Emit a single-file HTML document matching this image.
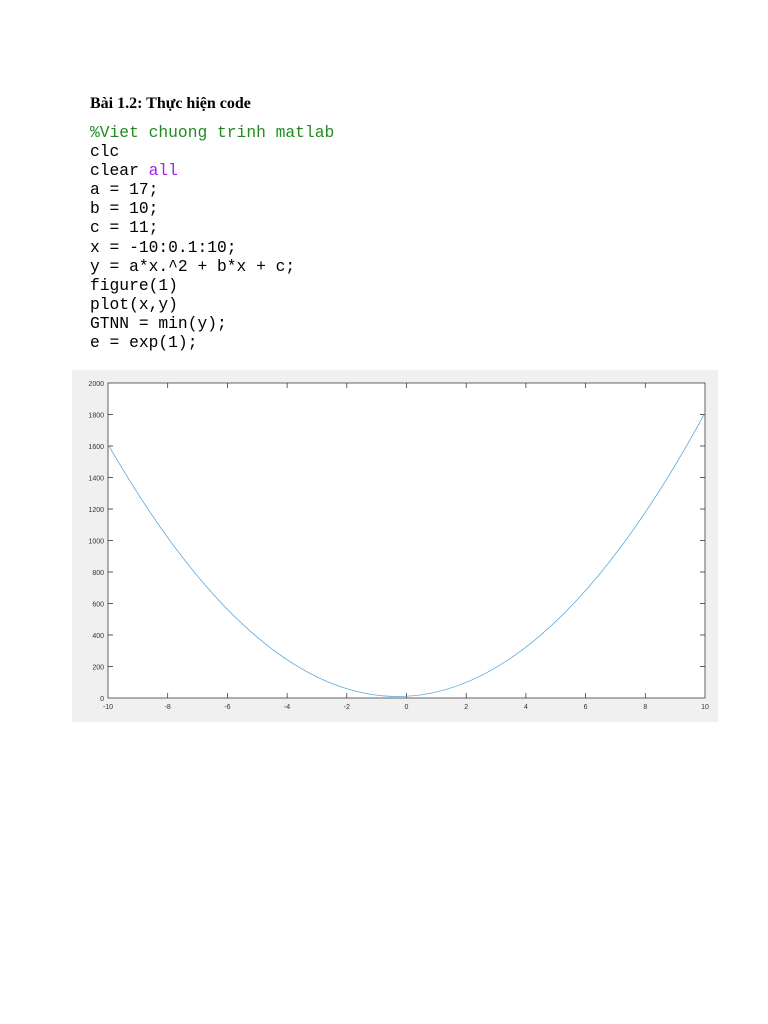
<!DOCTYPE html>
<html><head><meta charset="utf-8"><style>
body{margin:0;width:768px;height:1024px;background:#fff;position:relative;overflow:hidden}
.t{position:absolute;left:90px;top:95px;font:bold 16px "Liberation Serif",serif;color:#000}
pre{position:absolute;left:90px;top:123px;margin:0;font:16.3px/19.1px "Liberation Mono",monospace;color:#000}
.g{color:#228b22}.p{color:#a020f0}
svg{position:absolute;left:0;top:0}
</style></head><body>
<div class="t">Bài 1.2: Thực hiện code</div>
<pre><span class="g">%Viet chuong trinh matlab</span>
clc
clear <span class="p">all</span>
a = 17;
b = 10;
c = 11;
x = -10:0.1:10;
y = a*x.^2 + b*x + c;
figure(1)
plot(x,y)
GTNN = min(y);
e = exp(1);</pre>
<svg width="768" height="1024" font-family="Liberation Sans,sans-serif" font-size="7" fill="#333">
<rect x="72" y="370" width="646" height="352" fill="#f0f0f0"/>
<rect x="108" y="383" width="597" height="315" fill="#fff" stroke="#262626" stroke-width="0.7"/>
<g stroke="#262626" stroke-width="0.7">
<path d="M167.7 698v-5M227.4 698v-5M287.1 698v-5M346.8 698v-5M406.5 698v-5M466.2 698v-5M525.9 698v-5M585.6 698v-5M645.3 698v-5M167.7 383v5M227.4 383v5M287.1 383v5M346.8 383v5M406.5 383v5M466.2 383v5M525.9 383v5M585.6 383v5M645.3 383v5"/>
<path d="M108 666.5h5M108 635h5M108 603.5h5M108 572h5M108 540.5h5M108 509h5M108 477.5h5M108 446h5M108 414.5h5M705 666.5h-5M705 635h-5M705 603.5h-5M705 572h-5M705 540.5h-5M705 509h-5M705 477.5h-5M705 446h-5M705 414.5h-5"/>
</g>
<g text-anchor="end">
<text x="104" y="701">0</text><text x="104" y="669.5">200</text><text x="104" y="638">400</text><text x="104" y="606.5">600</text><text x="104" y="575">800</text><text x="104" y="543.5">1000</text><text x="104" y="512">1200</text><text x="104" y="480.5">1400</text><text x="104" y="449">1600</text><text x="104" y="417.5">1800</text><text x="104" y="386">2000</text>
</g>
<g text-anchor="middle">
<text x="108" y="709">-10</text><text x="167.7" y="709">-8</text><text x="227.4" y="709">-6</text><text x="287.1" y="709">-4</text><text x="346.8" y="709">-2</text><text x="406.5" y="709">0</text><text x="466.2" y="709">2</text><text x="525.9" y="709">4</text><text x="585.6" y="709">6</text><text x="645.3" y="709">8</text><text x="705" y="709">10</text>
</g>
<path fill="none" stroke="#5aa8dc" stroke-width="0.8" d="M108 444.3Q406.5 964 705 412.8"/>
</svg>
</body></html>
